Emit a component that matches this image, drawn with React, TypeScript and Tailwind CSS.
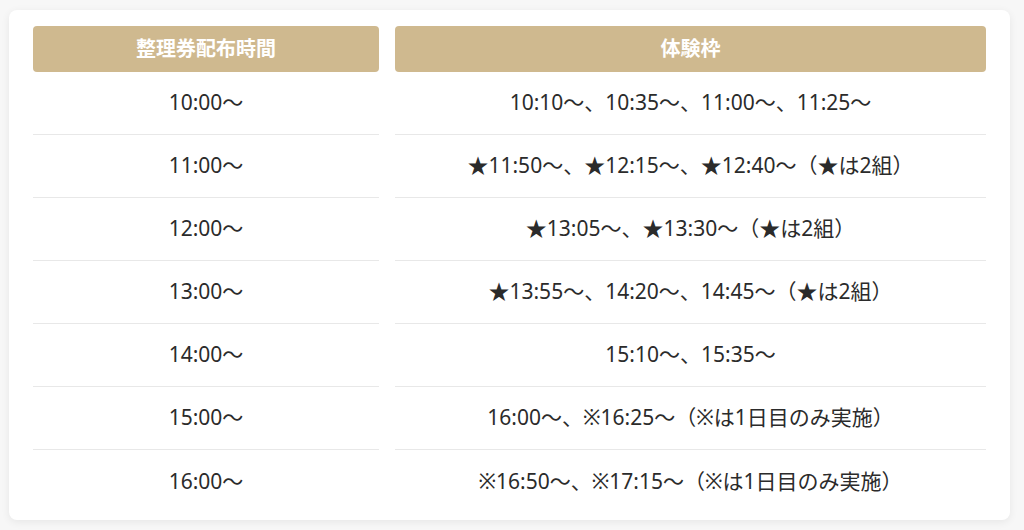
const rows = [
  { time: "10:00〜", slots: "10:10〜、10:35〜、11:00〜、11:25〜" },
  { time: "11:00〜", slots: "★11:50〜、★12:15〜、★12:40〜（★は2組）" },
  { time: "12:00〜", slots: "★13:05〜、★13:30〜（★は2組）" },
  { time: "13:00〜", slots: "★13:55〜、14:20〜、14:45〜（★は2組）" },
  { time: "14:00〜", slots: "15:10〜、15:35〜" },
  { time: "15:00〜", slots: "16:00〜、※16:25〜（※は1日目のみ実施）" },
  { time: "16:00〜", slots: "※16:50〜、※17:15〜（※は1日目のみ実施）" },
];

export default function App() {
  return (
    <div
      className="min-h-[530px] bg-[#f7f7f7] px-[9px] pt-[10px] pb-[10px] text-[#2b2b2b]"
      style={{ fontFamily: '"Noto Sans", "Noto Sans CJK JP", sans-serif' }}
    >
      <div className="w-[1001px] rounded-lg bg-white px-6 pt-4 pb-[7px] shadow-[0_2px_8px_rgba(0,0,0,0.07)]">
        <div className="grid grid-cols-[346px_591px] gap-x-4">
          {/* Header */}
          <div className="flex h-[46px] items-center justify-center rounded bg-[#cfb98f] text-[20px] font-bold text-white">
            整理券配布時間
          </div>
          <div className="flex h-[46px] items-center justify-center rounded bg-[#cfb98f] text-[20px] font-bold text-white">
            体験枠
          </div>

          {/* Rows */}
          {rows.map((r, i) => {
            const last = i === rows.length - 1;
            const border = last ? "" : "border-b border-[#e8e8e8]";
            return (
              <div key={r.time} className="contents">
                <div className={`flex h-[63px] items-center justify-center text-[21px] ${border}`}>
                  {r.time}
                </div>
                <div className={`flex h-[63px] items-center justify-center text-[21px] ${border}`}>
                  {r.slots}
                </div>
              </div>
            );
          })}
        </div>
      </div>
    </div>
  );
}
